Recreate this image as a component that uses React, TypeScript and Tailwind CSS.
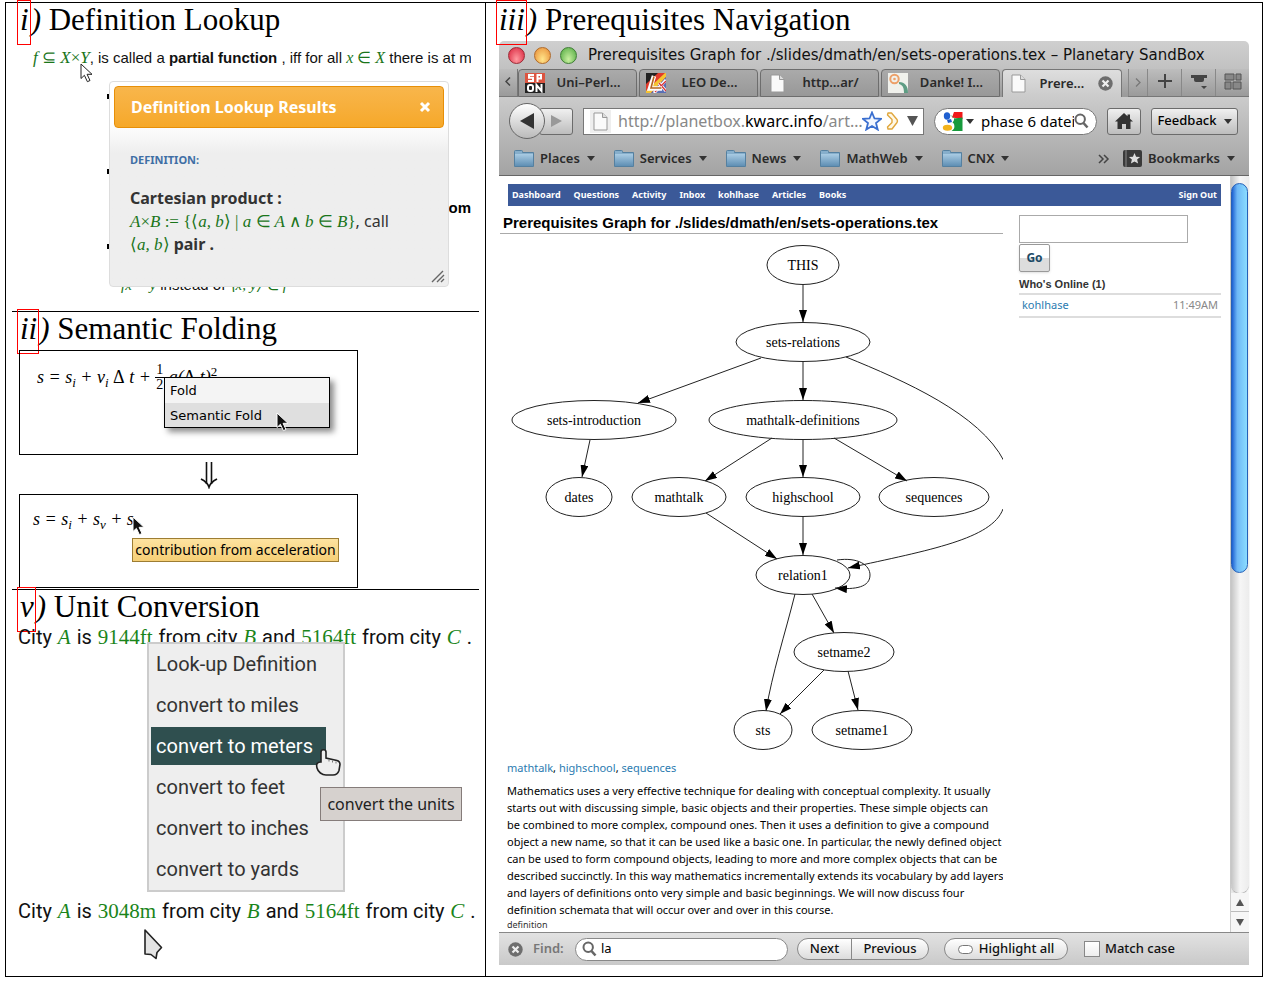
import React from "react";

const lucida = "font-['Noto_Sans',sans-serif]";
const serif = "font-['Liberation_Serif',serif]";
const helvetica = "font-['Liberation_Sans',sans-serif]";

function Heading({ mark, title, inset }: { mark: string; title: string; inset: string }) {
  return (
    <h2 className={`flex h-[34px] items-start whitespace-pre text-[31px] leading-[34px] text-black ${serif} ${inset}`}>
      <a href="#figure" className="relative -mt-[3px] h-[45px] border border-[#ff0000] pl-[2px] pr-px pt-[2px] italic">
        {mark}
      </a>
      <span className="italic">)</span>
      <span> {title}</span>
    </h2>
  );
}

function M({ children }: { children: React.ReactNode }) {
  return <i className={`text-[#1a751a] ${serif}`}>{children}</i>;
}

function Op({ children }: { children: React.ReactNode }) {
  return <span className="not-italic">{children}</span>;
}

function ArrowCursor({ dark, className }: { dark?: boolean; className: string }) {
  return (
    <svg className={className} width="14" height="20" viewBox="0 0 14 20" aria-hidden="true">
      <path
        d="M1 1v14.5l3.4-3.2 3 6.4 2.6-1.2-2.9-6.2H12z"
        fill={dark ? "#111" : "#fff"}
        stroke={dark ? "#fff" : "#222"}
        strokeWidth="1"
      />
    </svg>
  );
}

function DefinitionLookup() {
  return (
    <section className="border-b border-black pb-[16px]">
      <Heading mark="i" title="Definition Lookup" inset="pl-[5px]" />
      <div className={`relative mr-[8px] pt-[11px] ${helvetica}`}>
        <p className="h-[20px] overflow-hidden whitespace-nowrap pl-[21px] text-[15px] leading-[20px] text-[#111]">
          <M>
            <span className="text-[17px]">
              f <Op>⊆</Op> X<Op>×</Op>Y
            </span>
          </M>
          , is called a <b>partial function</b> , iff for all{" "}
          <M>
            <span className="text-[16px]">
              x <Op>∈</Op> X
            </span>
          </M>{" "}
          there is at most
        </p>
        <ul className="text-[15px] font-bold text-black">
          <li className="h-[75px] pl-[95px] pt-[26px]">
            <span className="block size-[5px] bg-black" />
          </li>
          <li className="flex h-[75px] justify-between pl-[95px] pt-[26px]">
            <span className="block size-[5px] bg-black" />
            <span className="pt-[28px]">om</span>
          </li>
          <li className="h-[57px] pl-[95px] pt-[26px]">
            <span className="block size-[5px] bg-black" />
          </li>
        </ul>
        <p className="h-[20px] whitespace-nowrap pl-[109px] text-[15px] leading-[20px] text-[#111]">
          <M>fx = y</M> instead of <M>⟨x, y⟩ ∈ f</M>
        </p>
        <ArrowCursor className="absolute left-[68px] top-[26px]" />
        <div
          className={`absolute left-[97px] top-[44px] h-[206px] w-[340px] rounded-[4px] border border-[#ddd] bg-linear-to-b from-white from-20% to-[#eee] to-35% p-[4px] text-[#333] ${lucida}`}
        >
          <div className="flex h-[42px] items-center justify-between rounded-[4px] border border-[#e78f08] bg-linear-to-b from-[#f8b64b] to-[#f6a828] pl-[16px] pr-[12px] text-white">
            <h3 className="text-[16px] font-bold leading-[22px]">Definition Lookup Results</h3>
            <button aria-label="Close">
              <svg width="12" height="12" viewBox="0 0 12 12">
                <path d="M2 2l8 8M10 2l-8 8" stroke="#fff" strokeWidth="3" />
              </svg>
            </button>
          </div>
          <div className="pl-[16px] pt-[23px]">
            <h4 className="text-[11px] font-bold leading-[18px] text-[#3f6fa5]">DEFINITION:</h4>
            <p className="pt-[18px] text-[16px] leading-[23px]">
              <b>Cartesian product :</b>
              <br />
              <M>
                <span className="text-[17px] leading-[22px]">
                  A<Op>×</Op>B <Op>:= {"{⟨"}</Op>a, b<Op>⟩ |</Op> a <Op>∈</Op> A <Op>∧</Op> b <Op>∈</Op> B<Op>{"}"}</Op>
                </span>
              </M>
              , call
              <br />
              <M>
                <span className="text-[17px] leading-[22px]">
                  <Op>⟨</Op>a, b<Op>⟩</Op>
                </span>
              </M>{" "}
              <b>pair .</b>
            </p>
          </div>
          <svg className="absolute bottom-[3px] right-[3px]" width="14" height="13" viewBox="0 0 14 13" aria-hidden="true">
            <path d="M1 12L12 1M6 12l7-7M10 12l3-3" stroke="#666" strokeWidth="1.4" fill="none" />
          </svg>
        </div>
      </div>
    </section>
  );
}

function Sub({ children }: { children: React.ReactNode }) {
  return <sub className="bottom-[-4px] text-[13px]">{children}</sub>;
}

function SemanticFolding() {
  return (
    <section className="border-b border-black pb-px">
      <Heading mark="ii" title="Semantic Folding" inset="pl-[5px]" />
      <div className="ml-[7px] mt-[4px] w-[339px]">
        <div className="relative h-[105px] border border-black">
          <p className={`flex h-[40px] items-center whitespace-pre pl-[17px] pt-[12px] text-[18px] italic text-black ${serif}`}>
            <span>
              s = s<Sub>i</Sub> + v<Sub>i</Sub> <Op>Δ</Op> t +{" "}
            </span>
            <span className="flex flex-col items-center text-[14px] not-italic leading-[14px]">
              <span className="border-b border-black px-px">1</span>
              <span>2</span>
            </span>
            <span>
              {" "}
              a(<Op>Δ</Op> t)<sup className="text-[13px] not-italic">2</sup>
            </span>
          </p>
          <div className="absolute left-[144px] top-[26px] w-[166px] border border-black bg-[#f4f4f4] text-[13px] text-black shadow-[4px_4px_6px_rgba(0,0,0,0.45)] font-['DejaVu_Sans',sans-serif]">
            <button className="block h-[25px] w-full px-[5px] pt-px text-left">Fold</button>
            <button className="block h-[24px] w-full bg-[#dfdfdf] px-[5px] pt-px text-left">Semantic Fold</button>
          </div>
          <ArrowCursor dark className="absolute left-[256px] top-[61px]" />
        </div>
        <div className="flex h-[39px] items-center justify-center pl-[40px]">
          <svg width="18" height="28" viewBox="0 0 18 28" aria-label="becomes">
            <path d="M6.500 1v22M11.500 1v22" stroke="#111" strokeWidth="1.600" fill="none" />
            <path d="M1 18c4 2 7 5 8 8 1-3 4-6 8-8" stroke="#111" strokeWidth="1.800" fill="none" />
          </svg>
        </div>
        <div className="relative h-[94px] border border-black">
          <p className={`whitespace-pre pl-[13px] pt-[12px] text-[18px] italic leading-[24px] text-black ${serif}`}>
            s = s<Sub>i</Sub> + s<Sub>v</Sub> + s<Sub>a</Sub>
          </p>
          <ArrowCursor dark className="absolute left-[112px] top-[21px]" />
          <div
            role="tooltip"
            className={`absolute left-[112px] top-[43px] flex h-[24px] w-[207px] items-center justify-center whitespace-nowrap border border-[#9d7d33] bg-linear-to-b from-[#fde3a0] to-[#f6cf75] pb-[2px] text-[14px] text-black ${lucida}`}
          >
            contribution from acceleration
          </div>
        </div>
      </div>
    </section>
  );
}

function Quantity({ children }: { children: React.ReactNode }) {
  return <span className={`mx-px text-[21px] text-[#1a851a] ${serif}`}>{children}</span>;
}

function Distance({ value }: { value: string }) {
  return (
    <p className="h-[26px] whitespace-nowrap pl-[6px] text-[20px] leading-[26px] text-[#111] font-['Roboto',sans-serif]">
      City <Quantity><i>A</i></Quantity> is <Quantity>{value}</Quantity> from city <Quantity><i>B</i></Quantity> and{" "}
      <Quantity>5164ft</Quantity> from city <Quantity><i>C</i></Quantity> .
    </p>
  );
}

const unitItems = [
  "Look-up Definition",
  "convert to miles",
  "convert to meters",
  "convert to feet",
  "convert to inches",
  "convert to yards",
];

function UnitConversion() {
  return (
    <section className="pb-[52px]">
      <Heading mark="v" title="Unit Conversion" inset="pl-[5px]" />
      <div className="relative">
        <Distance value="9144ft" />
        <div className="h-[248px]" />
        <Distance value="3048m" />
        <div className="absolute left-[135px] top-[18px] flex w-[198px] flex-col items-start gap-[3px] border-2 border-[#ccc] bg-[#eee] pb-[2px] pl-[2px] pt-px text-[20px] text-[#333] font-['Roboto',sans-serif]">
          {unitItems.map((item) => (
            <button
              key={item}
              className={`h-[38px] w-[175px] whitespace-nowrap pl-[5px] text-left ${
                item === "convert to meters" ? "bg-[#2f4f4f] text-white" : ""
              }`}
            >
              {item}
            </button>
          ))}
        </div>
        <svg className="absolute left-[302px] top-[124px]" width="28" height="32" viewBox="0 0 28 32" aria-hidden="true">
          <path
            d="M7 4c0-3 5-3 5 0v6l11 2.500c2 .5 3 2 3 4l-1 6c-1 3-3 4.500-6 4.500h-7c-4 0-8-3-9-7-1-4 0-6 4-6z"
            fill="#eee"
            stroke="#222"
            strokeWidth="1.6"
          />
          <path d="M15 11.500v2M18.500 12.500v2M22 13.500v2" stroke="#777" strokeWidth="1" />
        </svg>
        <div
          role="tooltip"
          className={`absolute left-[308px] top-[163px] flex h-[34px] w-[142px] items-center justify-center whitespace-nowrap border border-[#857c7a] bg-[#d6d1ce] text-[16px] text-[#222] ${lucida}`}
        >
          convert the units
        </div>
        <svg className="absolute left-[131px] top-[304px]" width="20" height="33" viewBox="0 0 20 33" aria-hidden="true">
          <path d="M2 2v24l6 .5 5 4 1-6 4.500-5z" fill="#e4e4e4" stroke="#222" strokeWidth="1.600" strokeLinejoin="round" />
        </svg>
      </div>
    </section>
  );
}

function PageIcon() {
  return (
    <svg width="15" height="19" viewBox="0 0 15 19" aria-hidden="true">
      <path d="M1 1h8.500L14 5.500V18H1z" fill="#fafafa" stroke="#999" />
      <path d="M9.500 1v4.500H14" fill="#ddd" stroke="#999" />
    </svg>
  );
}

function SponIcon() {
  return (
    <svg width="20" height="20" viewBox="0 0 20 20" aria-hidden="true">
      <rect width="20" height="10" fill="#dc5440" />
      <rect y="10" width="20" height="10" fill="#222" />
      <g fill="none" stroke="#fff" strokeWidth="2">
        <path d="M9 2H4v2.800h4V8H3" />
        <path d="M12.500 9V2H16v3.500h-3.500" />
        <rect x="3" y="12" width="5" height="6" rx="2" />
        <path d="M11.500 19v-7l5 6v-7" />
      </g>
    </svg>
  );
}

function LeoIcon() {
  return (
    <svg width="20" height="20" viewBox="0 0 20 20" aria-hidden="true">
      <rect width="20" height="20" fill="#e03a2b" />
      <path d="M0 0h12L0 11z" fill="#222" />
      <path d="M19 0L0 18v2h5L20 4V0z" fill="#f5c431" />
      <path d="M20 4v16H5z" fill="#5a6fb5" />
      <path d="M8 20L20 7M13 10l7 8" stroke="#fff" strokeWidth="3" />
      <path d="M9 19L20 8M13 10l7 8" stroke="#d8353a" strokeWidth="1.300" />
      <path d="M8 3L4 15.500h12" fill="none" stroke="#fff" strokeWidth="4.500" />
      <path d="M8 3.500L5 15h10.500" fill="none" stroke="#b5651f" strokeWidth="1.600" />
    </svg>
  );
}

function PortraitIcon() {
  return (
    <svg width="20" height="20" viewBox="0 0 20 20" aria-hidden="true">
      <rect width="20" height="20" fill="#f0f1ec" />
      <path d="M11 9c6 0 9 4 9 11h-4c0-5-1-8-5-9z" fill="#5f9d84" />
      <circle cx="6.500" cy="6" r="4.200" fill="none" stroke="#eda069" strokeWidth="2" />
      <circle cx="6.500" cy="6" r="1.300" fill="#eda069" />
    </svg>
  );
}

function GoogleIcon() {
  return (
    <svg className="shrink-0" width="21" height="21" viewBox="0 0 21 21" aria-hidden="true">
      <path d="M12 1h8.500v7L10 6.500z" fill="#f01818" />
      <path d="M12 7.500l8.500-1V20H13z" fill="#169a3c" />
      <path d="M8 4c5 2 5 5 2.500 7.500 3 2 3 6-1 8.500L13 20V8z" fill="#169a3c" />
      <ellipse cx="5" cy="5" rx="3.200" ry="3.700" fill="#1f5fd0" />
      <path d="M5 9l4-1 1 3-4 1z" fill="#1f5fd0" />
      <ellipse cx="5.500" cy="16.800" rx="4.700" ry="3" fill="#f2b31c" />
    </svg>
  );
}

function CloseBadge() {
  return (
    <svg width="15" height="15" viewBox="0 0 15 15" aria-hidden="true">
      <circle cx="7.500" cy="7.500" r="7.200" fill="#6e6e6e" />
      <path d="M4.500 4.500l6 6M10.500 4.500l-6 6" stroke="#eee" strokeWidth="2.200" />
    </svg>
  );
}

function Caret() {
  return (
    <svg width="8" height="5" viewBox="0 0 8 5" aria-hidden="true">
      <path d="M0 0h8L4 5z" fill="#333" />
    </svg>
  );
}

function Magnifier() {
  return (
    <svg className="shrink-0" width="15" height="16" viewBox="0 0 15 16" aria-hidden="true">
      <circle cx="6.200" cy="6.200" r="4.700" fill="none" stroke="#666" strokeWidth="2" />
      <path d="M9.500 10l4 4.500" stroke="#666" strokeWidth="2.600" />
    </svg>
  );
}

function Folder() {
  return (
    <svg width="20" height="17" viewBox="0 0 20 17" aria-hidden="true">
      <defs>
        <linearGradient id="folder" x1="0" y1="0" x2="0" y2="1">
          <stop offset="0" stopColor="#a9cbe3" />
          <stop offset="1" stopColor="#5f8fb4" />
        </linearGradient>
      </defs>
      <path d="M.5 3V1.500Q.5 .5 1.500 .5h6q1 0 1 1v1H19.500v14H.5z" fill="#86aecb" stroke="#5580a0" />
      <rect x="1" y="4" width="18" height="12" fill="url(#folder)" />
    </svg>
  );
}

const tabs = [
  { label: "Uni–Perl…", icon: <SponIcon /> },
  { label: "LEO De…", icon: <LeoIcon /> },
  { label: "http…ar/", icon: <PageIcon /> },
  { label: "Danke! I…", icon: <PortraitIcon /> },
];

const toolButton =
  "flex h-[27px] items-center justify-center rounded-[3px] border border-[#6b6b6b] bg-linear-to-b from-[#f0f0f0] to-[#bdbdbd]";

function BrowserChrome() {
  return (
    <header className={`rounded-t-[5px] text-[#2a2a2a] ${lucida}`}>
      <div className="rounded-t-[5px] bg-linear-to-b from-[#cfcfcf] to-[#b4b4b4]">
        <div className="flex h-[28px] items-center pl-[9px]">
          <span className="flex gap-[9px]">
            <span className="size-[17px] rounded-full border border-[#9c2a35] bg-radial-[at_50%_75%] from-[#ff9aa0] to-[#d8203a]" />
            <span className="size-[17px] rounded-full border border-[#b06a28] bg-radial-[at_50%_75%] from-[#ffe58a] to-[#e88a34]" />
            <span className="size-[17px] rounded-full border border-[#3f7d35] bg-radial-[at_50%_75%] from-[#c9f0a0] to-[#4fa83f]" />
          </span>
          <h1 className="whitespace-nowrap pl-[11px] text-[15px] leading-[22px] text-[#111] font-['DejaVu_Sans',sans-serif]">
            Prerequisites Graph for ./slides/dmath/en/sets-operations.tex – Planetary SandBox
          </h1>
        </div>
        <div className="flex h-[28px] items-stretch bg-linear-to-b from-[#bdbdbd] to-[#999] text-[13px] font-semibold">
          <button className="w-[19px] border-b border-r border-[#777] pb-[2px]" aria-label="Scroll tabs left">
            <svg className="mx-auto" width="6" height="9" viewBox="0 0 6 9">
              <path d="M5 .5L1 4.500l4 4" fill="none" stroke="#444" strokeWidth="1.500" />
            </svg>
          </button>
          {tabs.map((tab) => (
            <button
              key={tab.label}
              className="mr-[2px] flex w-[119px] items-center rounded-t-[4px] border border-[#6d6d6d] bg-linear-to-b from-[#aaa] to-[#989898] pl-[6px]"
            >
              <span className="flex w-[20px] justify-center">{tab.icon}</span>
              <span className="flex-1 pr-[4px] text-center">{tab.label}</span>
            </button>
          ))}
          <button className="flex w-[120px] items-center rounded-t-[4px] border border-b-0 border-[#777] bg-linear-to-b from-[#dedede] to-[#cbcbcb] px-[8px]">
            <PageIcon />
            <span className="flex-1 text-center">Prere…</span>
            <CloseBadge />
          </button>
          <span className="ml-[6px] flex flex-1 border-b border-[#777]">
            <button className="flex flex-1 items-center justify-center border-l border-[#888]" aria-label="Scroll tabs right">
              <svg width="6" height="9" viewBox="0 0 6 9">
                <path d="M1 .5l4 4-4 4" fill="none" stroke="#777" strokeWidth="1.300" />
              </svg>
            </button>
            <button className="flex w-[34px] items-center justify-center border-l border-[#888] pb-[3px]" aria-label="New tab">
              <svg width="14" height="14" viewBox="0 0 14 14">
                <path d="M7 0v14M0 7h14" stroke="#444" strokeWidth="2" />
              </svg>
            </button>
            <button className="flex w-[34px] items-center justify-center border-l border-[#888] pb-[2px]" aria-label="List tabs">
              <svg width="16" height="16" viewBox="0 0 16 16">
                <path d="M0 1h16v3h-3v2q0 2-2 2H5Q3 8 3 6V4H0zM10 12h6l-3 3z" fill="#444" />
              </svg>
            </button>
            <button className="flex w-[34px] items-center justify-center border-l border-[#888] pb-[3px]" aria-label="Tab groups">
              <svg width="18" height="17" viewBox="0 0 18 17">
                <path d="M1 1h9v6H1zM12 1h5v6h-5zM1 9h6v7H1zM9 9h8v7H9z" fill="#888" stroke="#555" />
              </svg>
            </button>
          </span>
        </div>
      </div>
      <div className="border-b border-[#666] bg-linear-to-b from-[#cbcbcb] to-[#a3a3a3]">
        <div className="flex h-[48px] items-center pl-[10px] pr-[11px]">
          <button
            className="z-10 flex size-[36px] items-center justify-center rounded-full border border-[#666] bg-linear-to-b from-white to-[#bbb]"
            aria-label="Back"
          >
            <svg width="14" height="16" viewBox="0 0 14 16">
              <path d="M14 0v16L0 8z" fill="#333" />
            </svg>
          </button>
          <button className={`-ml-[6px] w-[34px] ${toolButton}`} aria-label="Forward">
            <svg width="11" height="12" viewBox="0 0 11 12">
              <path d="M0 0v12l11-6z" fill="#999" />
            </svg>
          </button>
          <div className="ml-[10px] flex h-[27px] min-w-0 flex-1 items-center border border-[#777] bg-white pl-[6px] pr-[5px]">
            <span className="flex h-[23px] w-[21px] items-center justify-center bg-[#eee]">
              <PageIcon />
            </span>
            <p className="min-w-0 flex-1 overflow-hidden whitespace-nowrap pl-[7px] text-[16px] text-[#888]">
              http://planetbox.<span className="text-black">kwarc.info</span>/art…
            </p>
            <svg className="shrink-0" width="20" height="20" viewBox="0 0 20 20" aria-hidden="true">
              <path d="M10 1.500l2.500 6 6.500.4-5 4.200 1.700 6.400L10 15l-5.700 3.500L6 12.100 1 7.900l6.500-.4z" fill="#f2f7ff" stroke="#3a6fd0" strokeWidth="1.800" />
            </svg>
            <svg className="ml-[4px] shrink-0" width="13" height="18" viewBox="0 0 13 18" aria-hidden="true">
              <path d="M2 1h3.500L11 7.500q1 1.500 0 3L6 17H2l-.5-2L6 10.500v-3L1.500 3z" fill="#fff8e6" stroke="#e0a63c" strokeWidth="1.400" strokeLinejoin="round" />
            </svg>
            <svg className="ml-[8px] shrink-0" width="11" height="10" viewBox="0 0 11 10" aria-hidden="true">
              <path d="M0 0h11L5.500 10z" fill="#555" />
            </svg>
          </div>
          <label className="ml-[10px] flex h-[27px] w-[163px] items-center rounded-full border border-[#777] bg-white pl-[7px] pr-[7px]">
            <GoogleIcon />
            <span className="mx-[3px] shrink-0">
              <Caret />
            </span>
            <input aria-label="Search" defaultValue="phase 6 datei" className="w-0 min-w-0 flex-1 bg-transparent pl-[4px] text-[15px] text-black outline-none" />
            <Magnifier />
          </label>
          <button className={`ml-[10px] w-[34px] ${toolButton}`} aria-label="Home">
            <svg width="18" height="16" viewBox="0 0 18 16">
              <path d="M9 0l3.500 3.300V1.500H15v4.200l3 2.800h-2.500V16h-4.500v-5H7v5H2.500V8.500H0z" fill="#333" />
            </svg>
          </button>
          <button className={`ml-[10px] w-[87px] gap-[7px] text-[13px] font-medium text-black ${toolButton}`}>
            Feedback <Caret />
          </button>
        </div>
        <nav className="flex h-[30px] items-center pb-[3px] pl-[15px] pr-[14px] text-[13px] font-semibold" aria-label="Bookmarks toolbar">
          <ul className="flex gap-[19px]">
            {["Places", "Services", "News", "MathWeb", "CNX"].map((name) => (
              <li key={name}>
                <button className="flex items-center">
                  <Folder />
                  <span className="pl-[6px] pr-[7px]">{name}</span>
                  <Caret />
                </button>
              </li>
            ))}
          </ul>
          <button className="ml-auto" aria-label="More bookmarks">
            <svg width="12" height="10" viewBox="0 0 12 10">
              <path d="M1 1l4 4-4 4M6 1l4 4-4 4" fill="none" stroke="#444" strokeWidth="1.500" />
            </svg>
          </button>
          <button className="ml-[13px] flex items-center">
            <svg width="19" height="17" viewBox="0 0 19 17" aria-hidden="true">
              <rect width="19" height="17" rx="2" fill="#3a3a3a" />
              <path d="M3 0v17" stroke="#888" />
              <path d="M11.500 3l1.600 3.700 4 .3-3 2.600 1 3.900-3.600-2.100L7.900 13.500l1-3.900-3-2.600 4-.3z" fill="#ddd" />
            </svg>
            <span className="pl-[6px] pr-[7px]">Bookmarks</span>
            <Caret />
          </button>
        </nav>
      </div>
    </header>
  );
}

const nodes: [string, number, number, number][] = [
  ["THIS", 303, 31, 36],
  ["sets-relations", 303, 108, 67],
  ["sets-introduction", 94, 186, 82],
  ["mathtalk-definitions", 303, 186, 94],
  ["dates", 79, 263, 33],
  ["mathtalk", 179, 263, 47],
  ["highschool", 303, 263, 57],
  ["sequences", 434, 263, 55],
  ["relation1", 303, 341, 47],
  ["setname2", 344, 418, 50],
  ["sts", 263, 496, 29],
  ["setname1", 362, 496, 50],
];

const edges = [
  "M303 51V88",
  "M261 124L138 169",
  "M303 128V166",
  "M90 206L82 243",
  "M272 204L205 247",
  "M303 206V243",
  "M334 204L407 247",
  "M206 279L277 325",
  "M303 283V321",
  "M503 275C492 305 430 316 348 334",
  "M337 326C358 323 370 331 370 341C370 353 356 356 335 354",
  "M295 360C285 400 272 440 266 477",
  "M312 360L334 399",
  "M324 436L280 480",
  "M348 437L358 476",
];

function PrerequisiteGraph() {
  return (
    <svg className="block max-w-none" width="503" height="520" viewBox="0 0 503 520" role="img" aria-label="Prerequisites graph">
      <defs>
        <marker id="tip" viewBox="0 0 12 8" refX="12" refY="4" markerWidth="12" markerHeight="8" orient="auto" markerUnits="userSpaceOnUse">
          <path d="M0 0L12 4L0 8z" fill="#000" />
        </marker>
      </defs>
      <g fill="none" stroke="#222">
        <path d="M346 123C405 147 480 180 504 227" />
        {edges.map((d) => (
          <path key={d} d={d} markerEnd="url(#tip)" />
        ))}
        {nodes.map(([name, x, y, rx]) => (
          <ellipse key={name} cx={x} cy={y} rx={rx} ry="19.500" />
        ))}
      </g>
      <g className={`text-[14px] ${serif}`} textAnchor="middle" fill="#000">
        {nodes.map(([name, x, y]) => (
          <text key={name} x={x} y={y + 5}>
            {name}
          </text>
        ))}
      </g>
    </svg>
  );
}

const paragraph = [
  "Mathematics uses a very effective technique for dealing with conceptual complexity. It usually",
  "starts out with discussing simple, basic objects and their properties. These simple objects can",
  "be combined to more complex, compound ones. Then it uses a definition to give a compound",
  "object a new name, so that it can be used like a basic one. In particular, the newly defined object",
  "can be used to form compound objects, leading to more and more complex objects that can be",
  "described succinctly. In this way mathematics incrementally extends its vocabulary by add layers",
  "and layers of definitions onto very simple and basic beginnings. We will now discuss four",
  "definition schemata that will occur over and over in this course.",
];

function PageContent() {
  return (
    <div className={`flex-1 pt-[8px] ${lucida}`}>
      <nav className="mx-[9px] flex h-[22px] items-center gap-[13px] bg-[#3b5998] px-[4px] text-[9px] font-bold text-white">
        {["Dashboard", "Questions", "Activity", "Inbox", "kohlhase", "Articles", "Books"].map((name) => (
          <a key={name} href="#nav">
            {name}
          </a>
        ))}
        <a href="#signout" className="ml-auto">
          Sign Out
        </a>
      </nav>
      <div className="grid grid-cols-[minmax(0,1fr)_202px] gap-[16px] pl-px pr-[9px] pt-[8px]">
        <article className="overflow-hidden">
          <h2 className={`h-[20px] whitespace-nowrap border-b border-[#aaa] pl-[3px] text-[15px] font-bold leading-[18px] text-black ${helvetica}`}>
            Prerequisites Graph for ./slides/dmath/en/sets-operations.tex
          </h2>
          <PrerequisiteGraph />
          <p className="pl-[7px] pt-[5px] text-[11px] leading-[17px]">
            <a href="#mathtalk" className="text-[#2b7bb0]">mathtalk</a>,{" "}
            <a href="#highschool" className="text-[#2b7bb0]">highschool</a>,{" "}
            <a href="#sequences" className="text-[#2b7bb0]">sequences</a>
          </p>
          <p className="pl-[7px] pt-[6px] text-[11px] leading-[17px] text-black">
            {paragraph.map((line) => (
              <span key={line} className="block whitespace-nowrap">
                {line}
              </span>
            ))}
          </p>
          <p className="pl-[7px] text-[9px] leading-[14px] text-[#333]">definition</p>
        </article>
        <aside className="pt-px">
          <input aria-label="Search site" className="block h-[28px] w-[169px] border border-[#aaa] bg-white" />
          <button className="mt-px h-[28px] w-[31px] rounded-[2px] border border-[#999] bg-linear-to-b from-white from-50% to-[#ddd] to-50% text-[12px] font-bold text-[#1c4a66] shadow-sm">
            Go
          </button>
          <h3 className={`pt-[3px] text-[11px] font-bold leading-[18px] text-[#333] ${helvetica}`}>Who&apos;s Online (1)</h3>
          <p className="flex h-[25px] items-center justify-between border-y-2 border-[#ddd] px-[3px] text-[11px] text-[#888]">
            <a href="#kohlhase" className="text-[#2b7bb0]">kohlhase</a>
            <span>11:49AM</span>
          </p>
        </aside>
      </div>
    </div>
  );
}

function Scrollbar() {
  return (
    <div className="flex w-[19px] flex-col border-l border-[#ccc] bg-linear-to-r from-[#e6e6e6] to-[#fafafa]" aria-hidden="true">
      <div className="flex-1 rounded-b-full bg-linear-to-r from-[#c4c4c4] via-[#f6f6f6] to-[#ececec] pt-[7px] shadow-[0_1px_1px_#aaa]">
        <div className="h-[390px] w-[17px] rounded-full border border-[#2560b8] bg-linear-to-r from-[#1f5fd0] via-[#6fb8f6] via-35% to-[#8adcff]" />
      </div>
      <div className="flex h-[19px] items-center justify-center border-b border-[#bbb] bg-[#f6f6f6]">
        <svg width="8" height="7" viewBox="0 0 8 7">
          <path d="M0 7h8L4 0z" fill="#555" />
        </svg>
      </div>
      <div className="flex h-[20px] items-center justify-center bg-[#f6f6f6]">
        <svg width="8" height="7" viewBox="0 0 8 7">
          <path d="M0 0h8L4 7z" fill="#555" />
        </svg>
      </div>
    </div>
  );
}

const findButton = "h-[22px] border border-[#888] bg-linear-to-b from-white to-[#dcdcdc] text-center";

function FindBar() {
  return (
    <footer className={`flex h-[33px] items-center border-t border-[#888] bg-linear-to-b from-[#e2e2e2] to-[#c9c9c9] pl-[9px] text-[13px] font-medium text-[#111] ${lucida}`}>
      <button aria-label="Close find bar">
        <CloseBadge />
      </button>
      <label htmlFor="find" className="w-[52px] pl-[10px] font-semibold text-[#777]">
        Find:
      </label>
      <span className="flex h-[23px] w-[213px] items-center gap-[4px] rounded-full border border-[#888] bg-white pl-[6px]">
        <Magnifier />
        <input id="find" defaultValue="la" className="w-0 flex-1 bg-transparent font-normal text-black outline-none" />
      </span>
      <button className={`ml-[9px] w-[55px] rounded-l-full ${findButton}`}>Next</button>
      <button className={`-ml-px w-[78px] rounded-r-full ${findButton}`}>Previous</button>
      <button className={`ml-[15px] flex w-[124px] items-center justify-center gap-[6px] rounded-full ${findButton}`}>
        <span className="h-[9px] w-[15px] rounded-full border border-[#777] bg-white" />
        Highlight all
      </button>
      <label className="ml-[16px] flex items-center gap-[5px]">
        <input type="checkbox" className="size-[16px] appearance-none border border-[#888] bg-linear-to-b from-white to-[#eee]" />
        Match case
      </label>
    </footer>
  );
}

export default function App() {
  return (
    <div className="bg-white px-[5px] pb-[5px] pt-[2px]">
      <main className="grid grid-cols-[minmax(0,480fr)_minmax(0,776fr)] border border-black">
        <div className="border-r border-black px-[6px]">
          <DefinitionLookup />
          <SemanticFolding />
          <UnitConversion />
        </div>
        <section className="flex flex-col pb-[11px]">
          <Heading mark="iii" title="Prerequisites Navigation" inset="pl-[10px]" />
          <div className="mx-[13px] mt-[4px] flex flex-1 flex-col">
            <BrowserChrome />
            <div className="flex flex-1">
              <PageContent />
              <Scrollbar />
            </div>
            <FindBar />
          </div>
        </section>
      </main>
    </div>
  );
}
